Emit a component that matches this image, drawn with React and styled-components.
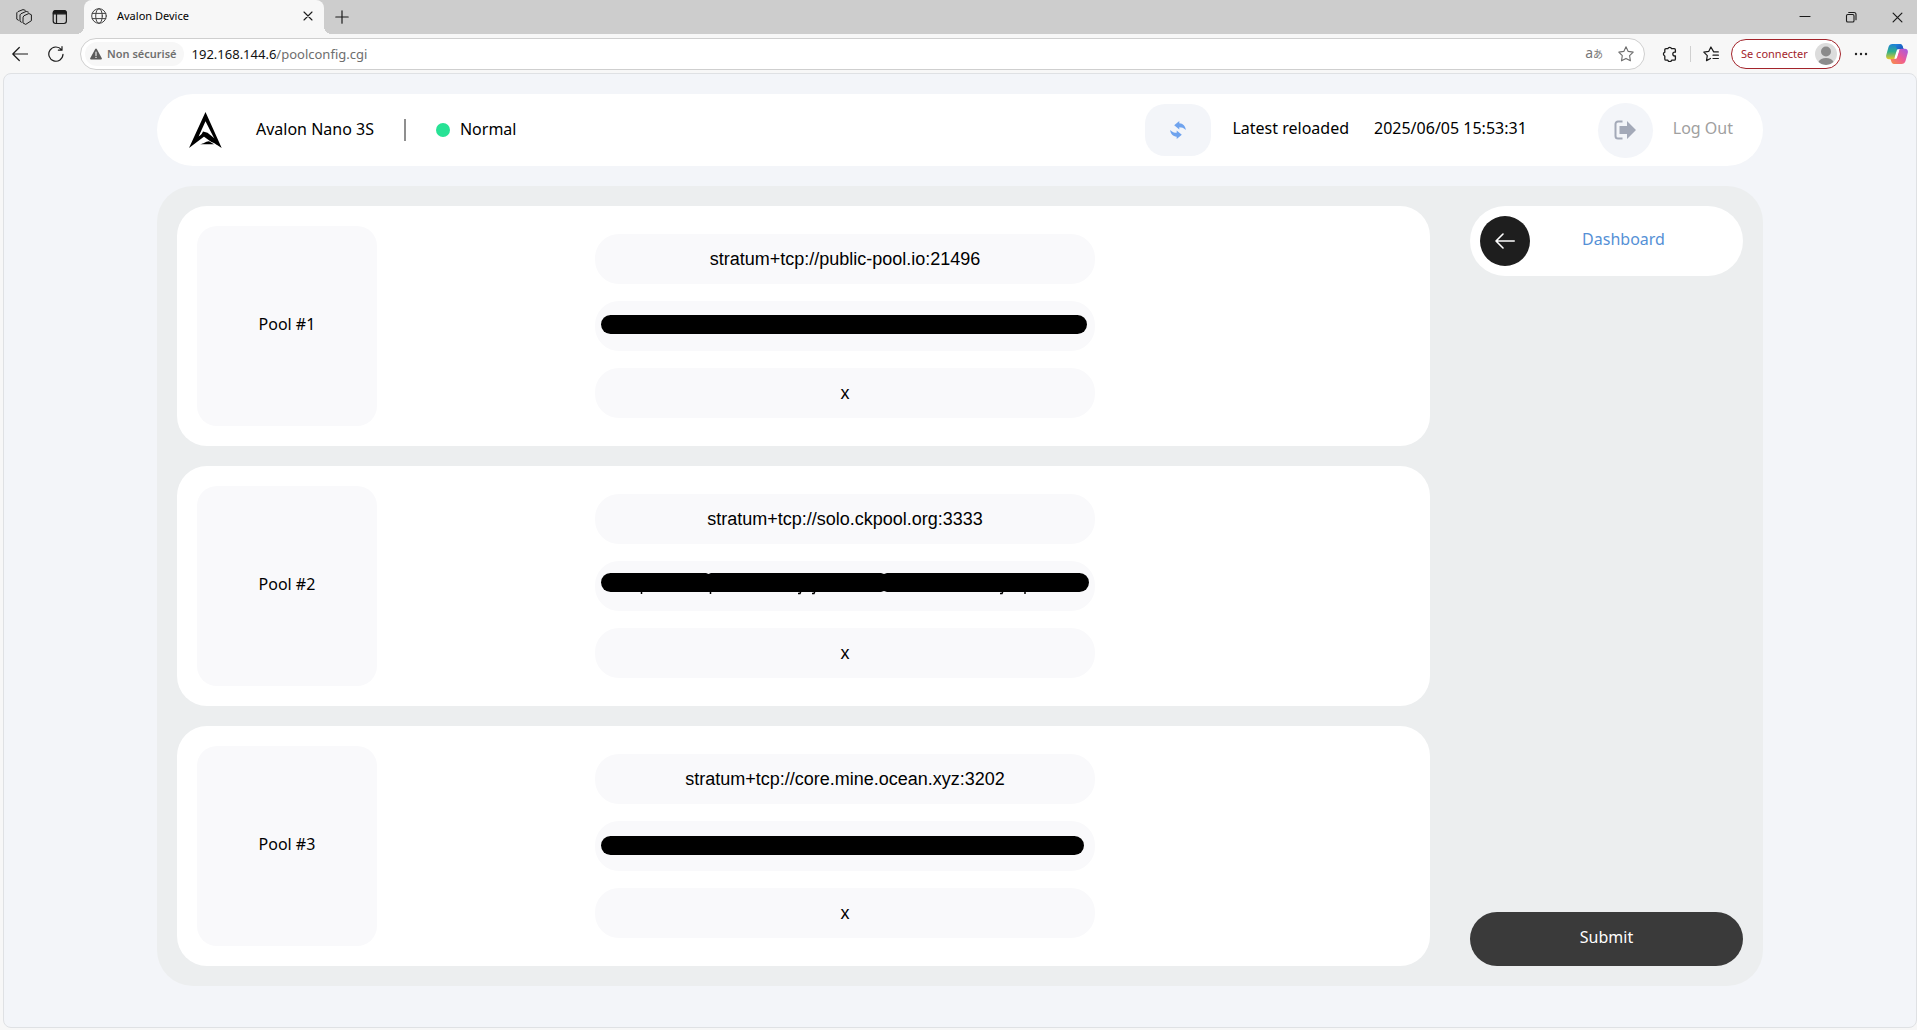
import React, { useState } from "react";
import styled, { createGlobalStyle, css } from "styled-components";

const GlobalStyle = createGlobalStyle`
  :root {
    --chrome: #f7f7f7;
    --page: #f3f5f9;
    --panel: #eceeef;
    --soft: #f9f9fb;
  }

  * {
    box-sizing: border-box;
  }

  body {
    margin: 0;
    background: var(--chrome);
    font-family: "Noto Sans", "Open Sans", sans-serif;
    font-size: 16px;
    line-height: 24px;
    color: #000;
  }

  button,
  input {
    margin: 0;
    padding: 0;
    border: 0;
    font: inherit;
    color: inherit;
    background: none;
  }

  svg {
    display: block;
    flex: none;
  }
`;

const Browser = styled.div`
  display: flex;
  flex-direction: column;
  min-height: 100vh;
`;

/* ---------- browser chrome ---------- */

const TabStrip = styled.div`
  display: flex;
  align-items: center;
  height: 34px;
  padding: 0 12px 0 16px;
  background: #cdcdcd;
`;

const StripButtons = styled.div`
  display: flex;
  align-items: center;
  gap: 20px;
  width: 68px;
`;

const IconButton = styled.button`
  display: grid;
  place-items: center;
  width: ${(props) => props.$size || 16}px;
  height: ${(props) => props.$size || 16}px;
  color: ${(props) => props.$color || "#1b1b1b"};
`;

const Tab = styled.div`
  position: relative;
  display: flex;
  align-items: center;
  gap: 10px;
  width: 240px;
  height: 34px;
  margin-right: 8px;
  padding: 0 8px 2px 7px;
  background: var(--chrome);
  border-radius: 8px 8px 0 0;
  font-size: 11px;

  &::before,
  &::after {
    content: "";
    position: absolute;
    bottom: 0;
    width: 8px;
    height: 8px;
  }

  &::before {
    right: 100%;
    background: radial-gradient(circle at 0 0, transparent 8px, var(--chrome) 8px);
  }

  &::after {
    left: 100%;
    background: radial-gradient(circle at 100% 0, transparent 8px, var(--chrome) 8px);
  }
`;

const TabTitle = styled.span`
  flex: 1;
`;

const WindowButtons = styled.div`
  display: flex;
  gap: 30px;
  margin-left: auto;
`;

const Toolbar = styled.div`
  display: flex;
  align-items: center;
  height: 39px;
  padding: 0 4px 0 12px;
  background: var(--chrome);
`;

const NavButtons = styled.div`
  display: flex;
  gap: 20px;
  width: 68px;
`;

const AddressBar = styled.div`
  flex: 1;
  display: flex;
  align-items: center;
  height: 32px;
  padding: 0 10px 0 4px;
  background: #fff;
  border: 1px solid #cfcfcf;
  border-radius: 16px;
`;

const SecurityChip = styled.button`
  display: flex;
  align-items: center;
  gap: 5px;
  height: 24px;
  padding: 0 7px 0 5px;
  background: var(--chrome);
  border-radius: 12px;
  font-size: 11px;
  font-weight: 600;
  color: #6f6f6f;
`;

const Url = styled.span`
  flex: 1;
  padding-left: 8px;
  font-size: 13px;
  color: #6e6e6e;

  b {
    font-weight: 400;
    color: #111;
  }
`;

const Translate = styled.button`
  margin-right: 15px;
  font-family: "Noto Sans", "Noto Sans CJK JP", sans-serif;
  font-size: 14px;
  color: #777;

  small {
    font-size: 10px;
  }
`;

const ToolbarActions = styled.div`
  display: flex;
  align-items: center;
  gap: 12px;
  padding-left: 17px;
`;

const Separator = styled.span`
  width: 1px;
  height: 16px;
  background: #d0d0d0;
`;

const SignIn = styled.button`
  display: flex;
  align-items: center;
  justify-content: space-between;
  width: 110px;
  height: 30px;
  padding: 0 3px 0 9px;
  border: 1px solid #a3242b;
  border-radius: 15px;
  font-size: 11px;
  color: #a3242b;
  background: #fff;
`;

/* ---------- device page ---------- */

const Page = styled.main`
  flex: 1;
  margin: 0 0 2px 3px;
  padding: 20px 0 40px;
  background: var(--page);
  border: 1px solid #dfe1e4;
  border-radius: 8px;
`;

const Container = styled.div`
  display: flex;
  flex-direction: column;
  gap: 20px;
  width: 84%;
  margin: 0 auto;
`;

const Header = styled.header`
  display: flex;
  align-items: center;
  height: 72px;
  padding: 0 30px 0 32px;
  background: #fff;
  border-radius: 36px;
`;

const DeviceName = styled.span`
  margin-left: 33px;
  padding: 0 30px 2px 0;
`;

const Status = styled.span`
  display: flex;
  align-items: center;
  gap: 10px;
  padding-left: 30px;

  &::before {
    content: "";
    width: 14px;
    height: 14px;
    border-radius: 50%;
    background: #27e295;
  }
`;

const Divider = styled.span`
  width: 2px;
  height: 22px;
  background: #8f8f8f;
`;

const Raised = styled.span`
  padding-bottom: ${(props) => props.$by || 2}px;
`;

const HeaderActions = styled.div`
  display: flex;
  align-items: center;
  margin-left: auto;
`;

const Reload = styled.button`
  display: grid;
  place-items: center;
  width: 66px;
  height: 52px;
  margin-right: 21px;
  border-radius: 20px;
  background: var(--page);
`;

const ReloadTime = styled.time`
  margin: 0 71px 0 25px;
  padding-bottom: 4px;
`;

const LogOut = styled.button`
  display: flex;
  align-items: center;
  gap: 20px;
  color: #a0a0a0;
`;

const Round = styled.span`
  display: grid;
  place-items: center;
  width: ${(props) => props.$size}px;
  height: ${(props) => props.$size}px;
  border-radius: 50%;
  background: ${(props) => props.$bg};
`;

const Panel = styled.form`
  display: grid;
  grid-template-columns: 1fr 273px;
  gap: 40px;
  padding: 20px;
  background: var(--panel);
  border-radius: 36px;
`;

const Pools = styled.div`
  display: flex;
  flex-direction: column;
  gap: 20px;
`;

const PoolCard = styled.section`
  display: grid;
  grid-template-columns: 180px 9fr 500px 13fr;
  padding: 20px;
  background: #fff;
  border-radius: 30px;
`;

const PoolName = styled.h2`
  display: grid;
  place-items: center;
  height: 200px;
  margin: 0;
  padding-bottom: 4px;
  background: var(--soft);
  border-radius: 20px;
  font-size: 16px;
  font-weight: 400;
`;

const PoolFields = styled.div`
  grid-column: 3;
  align-self: center;
  display: flex;
  flex-direction: column;
  gap: 17px;
`;

const Field = styled.label`
  position: relative;
  display: block;
  height: 50px;
`;

const FieldInput = styled.input`
  width: 100%;
  height: 50px;
  border-radius: 24px;
  background: var(--soft);
  font-family: "Liberation Sans", Arial, sans-serif;
  font-size: 18px;
  text-align: center;
`;

const Mask = styled.svg`
  position: absolute;
  left: 6px;
  top: ${(props) => props.$top}px;
`;

const Side = styled.aside`
  display: flex;
  flex-direction: column;
  justify-content: space-between;
`;

const sideButton = css`
  display: flex;
  align-items: center;
  border-radius: 36px;
`;

const DashboardLink = styled.a`
  ${sideButton}
  height: 70px;
  padding: 0 10px;
  background: #fff;
  color: #5590d6;
  text-decoration: none;

  & > span:last-child {
    flex: 1;
    padding-right: 16px;
    text-align: center;
  }
`;

const Submit = styled.button`
  ${sideButton}
  justify-content: center;
  height: 54px;
  background: #3a3a3a;
  color: #fff;
`;

/* ---------- icons ---------- */

const Line = ({ size = 16, box = 16, width = 1.2, children }) => (
  <svg
    width={size}
    height={size}
    viewBox={`0 0 ${box} ${box}`}
    fill="none"
    stroke="currentColor"
    strokeWidth={width}
    strokeLinecap="round"
    strokeLinejoin="round"
    aria-hidden="true"
  >
    {children}
  </svg>
);

const WorkspacesIcon = () => (
  <Line width={1}>
    <path d="M7.3 7.800 8 6.700 12.900 4.500 15.400 5.800V11.700L9.700 15.400 7.300 14.100z" />
    <path d="M5.400 13.200 4 12.300V5.900L5 4.700 10.200 2.400 12.300 3.100" />
    <path d="M2.400 11.200 .800 10.200V3.800L2 2.600 7 .6 9.200 1.300" />
  </Line>
);

const TabActionsIcon = () => (
  <Line width={1.2}>
    <rect x="1.2" y="1.700" width="13.200" height="12.800" rx="2.400" />
    <path d="M1.400 4.800V4a2.300 2.300 0 0 1 2.300-2.300h8.200A2.300 2.300 0 0 1 14.300 4v.8z" fill="currentColor" />
    <path d="M4.500 5v9" />
  </Line>
);

const GlobeIcon = () => (
  <Line width={1}>
    <g stroke="#444">
      <circle cx="8" cy="8" r="7.300" />
      <ellipse cx="8" cy="8" rx="3.300" ry="7.300" />
      <path d="M1.300 5.400h13.400M1.300 10.600h13.400" />
    </g>
  </Line>
);

const CloseIcon = ({ size }) => (
  <Line size={size} box={10} width={1.1}>
    <path d="M1 1l8 8M9 1 1 9" />
  </Line>
);

const PlusIcon = () => (
  <Line size={14} box={14}>
    <path d="M7 .8v12.400M.8 7h12.400" />
  </Line>
);

const MinimizeIcon = () => (
  <Line>
    <path d="M3 7.500h10" />
  </Line>
);

const RestoreIcon = () => (
  <Line width={1.1}>
    <rect x="3.500" y="5.500" width="7.500" height="7.500" rx="1.300" />
    <path d="M5.700 3.500h5.300a2 2 0 0 1 2 2v5.300" />
  </Line>
);

const BackIcon = () => (
  <Line>
    <path d="M15.500 8H.8M7.300 1.500.8 8l6.500 6.500" />
  </Line>
);

const RefreshIcon = () => (
  <Line>
    <path d="M15 8.300A7.100 7.100 0 1 1 13.400 3.600M14 .7v3.500h-3.600" />
  </Line>
);

const WarningIcon = () => (
  <svg width="12" height="12" viewBox="0 0 12 12" aria-hidden="true">
    <path d="M5.200.9a.9.9 0 0 1 1.600 0l5 9.300c.3.700-.1 1.300-.8 1.300H1c-.7 0-1.100-.6-.8-1.300z" fill="#5c5c5c" />
    <path d="M6 4v3.600" stroke="#f7f7f7" strokeWidth="1.1" strokeLinecap="round" />
    <circle cx="6" cy="9.400" r=".7" fill="#f7f7f7" />
  </svg>
);

const StarIcon = () => (
  <Line width={1.1}>
    <path d="M8 .8l2.200 4.600 5 .7-3.600 3.600.8 5.100L8 12.400l-4.500 2.400.8-5.100L.8 6.100l5-.7z" />
  </Line>
);

const ExtensionsIcon = () => (
  <Line width={1.3}>
    <path d="M5.800 2.700a2 2 0 0 1 3.800 0h2.600a1.200 1.200 0 0 1 1.200 1.200v2.300h-.7a1.900 1.900 0 0 0 0 3.800h.7v2.900a1.200 1.200 0 0 1-1.200 1.200h-2.500a2 2 0 0 1-3.900 0H4a1.200 1.200 0 0 1-1.200-1.200V10a2 2 0 0 1 0-3.800V3.900A1.200 1.200 0 0 1 4 2.700z" />
  </Line>
);

const FavoritesIcon = () => (
  <Line width={1.2}>
    <path d="M15.300 5.900h-4.600L7.900 1 5.700 5.400.8 6.200l3.500 3.500-.8 4.900 4-2.100M10 9.200h5.400M10 12.500h5.400" />
  </Line>
);

const AvatarIcon = () => (
  <svg width="22" height="22" viewBox="0 0 22 22" aria-hidden="true">
    <circle cx="11" cy="11" r="11" fill="#dcdcdc" />
    <circle cx="11" cy="8.500" r="5" fill="#8b8b8b" />
    <path d="M3.500 19c1-2.800 4-4 7.500-4s6.500 1.200 7.500 4A11 11 0 0 1 11 22a11 11 0 0 1-7.500-3z" fill="#8b8b8b" />
  </svg>
);

const MoreIcon = () => (
  <svg width="16" height="16" viewBox="0 0 16 16" fill="#222" aria-hidden="true">
    <circle cx="3" cy="8" r="1.200" />
    <circle cx="8" cy="8" r="1.200" />
    <circle cx="13" cy="8" r="1.200" />
  </svg>
);

const CopilotIcon = () => (
  <svg width="22" height="20" viewBox="0 0 22 20" aria-hidden="true">
    <defs>
      <linearGradient id="copilotLeft" x1="0" y1="0" x2="0" y2="1">
        <stop offset="0" stopColor="#1b7fd8" />
        <stop offset=".5" stopColor="#2fb08c" />
        <stop offset="1" stopColor="#e8c928" />
      </linearGradient>
      <linearGradient id="copilotTop" x1="0" y1="0" x2="1" y2="1">
        <stop offset="0" stopColor="#2089e0" />
        <stop offset="1" stopColor="#1a49b5" />
      </linearGradient>
      <linearGradient id="copilotRight" x1="1" y1="0" x2="0" y2="1">
        <stop offset="0" stopColor="#a05be8" />
        <stop offset=".5" stopColor="#ee5a94" />
        <stop offset="1" stopColor="#f89245" />
      </linearGradient>
    </defs>
    <path d="M6.500 0H14c1.500 0 2.200 1 2.700 2.500L17.500 5H14c-1.600 0-2.500.8-3 2.400L9.300 13c-.5 1.500-1.200 2.200-2.700 2.200H3C1 15.200-.3 13.500.2 11.200L2.500 3C3.100 1.200 4.400 0 6.500 0z" fill="url(#copilotLeft)" />
    <path d="M9 0h5c1.500 0 2.200 1 2.700 2.500L17.500 5H14c-1.300 0-2 .4-2.600 1.400z" fill="url(#copilotTop)" />
    <path d="M15.500 20H8c-1.500 0-2.200-1-2.700-2.500L4.500 15H8c1.600 0 2.500-.8 3-2.400L12.700 7c.5-1.500 1.200-2.200 2.700-2.200H19c2 0 3.300 1.700 2.800 4L19.500 17c-.6 1.800-1.900 3-4 3z" fill="url(#copilotRight)" />
    <path d="M12 6.500 9.800 13.500" stroke="#fff" strokeWidth="2.400" strokeLinecap="round" />
  </svg>
);

const AvalonLogo = () => (
  <svg width="34" height="36" viewBox="0 0 34 36" role="img" aria-label="Avalon">
    <path d="M16.500 0 32.700 36 26.500 32 25 26 16.500 9.200 9.600 24.500 13 22 15.200 24.500 0 36z" />
    <path d="M14 19.500 18.500 20.800 27.500 28 28.200 32.500 22 29.800 12.300 22.800z" />
    <path d="M11 32.300c4-.5 5-2.800 9-3l5 3z" />
  </svg>
);

const SyncIcon = () => (
  <svg width="16" height="18" viewBox="0 0 16 18" fill="#6fa3ee" aria-hidden="true">
    <path id="syncArrow" d="M9.300 0v2.300C13 2.600 15.500 5 15.800 9 13.800 6.800 11.800 6.200 9.300 6.200V8.500L4.200 4.200z" />
    <use href="#syncArrow" transform="rotate(180 8 9)" />
  </svg>
);

const LogOutIcon = () => (
  <svg width="22" height="20" viewBox="0 0 22 20" aria-hidden="true">
    <path d="M8.500 1.500H4A2.500 2.500 0 0 0 1.500 4v12A2.500 2.500 0 0 0 4 18.500h4.500" fill="none" stroke="#a3a9b8" strokeWidth="2" />
    <path d="M5.500 6H13V1l9 9-9 9v-5H5.500z" fill="#a3a9b8" />
  </svg>
);

const ArrowLeftIcon = () => (
  <Line size={20} box={20} width={1.6}>
    <path d="M19.200 10H1M8 3l-7 7 7 7" />
  </Line>
);

/* ---------- page parts ---------- */

const POOLS = [
  { id: 1, url: "stratum+tcp://public-pool.io:21496", pass: "x", mask: { top: 14, width: 486 } },
  { id: 2, url: "stratum+tcp://solo.ckpool.org:3333", pass: "x", mask: { top: 12, width: 488, tails: true } },
  { id: 3, url: "stratum+tcp://core.mine.ocean.xyz:3202", pass: "x", mask: { top: 15, width: 483 } },
];

const WorkerMask = ({ top, width, tails }) => (
  <Mask $top={top} width={width} height="22" viewBox={`0 0 ${width} 22`} aria-hidden="true">
    <rect width={width} height="19" rx="9.500" />
    {tails && (
      <>
        <path d="M40.500 18v3M109.500 18v3M424 18v3M200 18l-1 2.500h-2M214 18l-1 2.500h-2M402 18l-1 2.500h-2" fill="none" stroke="#000" strokeWidth="1.500" />
        <path d="M105 0h5l-2.500 1zM280 0h6l-3 1zM280 19h6l-3-1z" fill="#f9f9fb" />
      </>
    )}
  </Mask>
);

const Pool = ({ pool }) => {
  const [url, setUrl] = useState(pool.url);
  const [pass, setPass] = useState(pool.pass);
  return (
    <PoolCard>
      <PoolName>Pool #{pool.id}</PoolName>
      <PoolFields>
        <Field>
          <FieldInput aria-label={`Pool ${pool.id} URL`} value={url} onChange={(e) => setUrl(e.target.value)} />
        </Field>
        <Field>
          <FieldInput aria-label={`Pool ${pool.id} worker`} />
          <WorkerMask {...pool.mask} />
        </Field>
        <Field>
          <FieldInput aria-label={`Pool ${pool.id} password`} value={pass} onChange={(e) => setPass(e.target.value)} />
        </Field>
      </PoolFields>
    </PoolCard>
  );
};

const BrowserChrome = () => (
  <>
    <TabStrip>
      <StripButtons>
        <IconButton aria-label="Workspaces">
          <WorkspacesIcon />
        </IconButton>
        <IconButton aria-label="Tab actions">
          <TabActionsIcon />
        </IconButton>
      </StripButtons>
      <Tab>
        <GlobeIcon />
        <TabTitle>Avalon Device</TabTitle>
        <IconButton aria-label="Close tab">
          <CloseIcon size={10} />
        </IconButton>
      </Tab>
      <IconButton aria-label="New tab" $size={20}>
        <PlusIcon />
      </IconButton>
      <WindowButtons>
        <IconButton aria-label="Minimize">
          <MinimizeIcon />
        </IconButton>
        <IconButton aria-label="Restore">
          <RestoreIcon />
        </IconButton>
        <IconButton aria-label="Close window">
          <CloseIcon size={11} />
        </IconButton>
      </WindowButtons>
    </TabStrip>
    <Toolbar>
      <NavButtons>
        <IconButton aria-label="Back">
          <BackIcon />
        </IconButton>
        <IconButton aria-label="Refresh">
          <RefreshIcon />
        </IconButton>
      </NavButtons>
      <AddressBar>
        <SecurityChip>
          <WarningIcon />
          Non sécurisé
        </SecurityChip>
        <Url>
          <b>192.168.144.6</b>/poolconfig.cgi
        </Url>
        <Translate aria-label="Translate">
          a<small>あ</small>
        </Translate>
        <IconButton aria-label="Add to favorites" $color="#6e6e6e">
          <StarIcon />
        </IconButton>
      </AddressBar>
      <ToolbarActions>
        <IconButton aria-label="Extensions">
          <ExtensionsIcon />
        </IconButton>
        <Separator />
        <IconButton aria-label="Favorites">
          <FavoritesIcon />
        </IconButton>
        <SignIn>
          Se connecter
          <AvatarIcon />
        </SignIn>
        <IconButton aria-label="More">
          <MoreIcon />
        </IconButton>
        <IconButton aria-label="Copilot" $size={32}>
          <CopilotIcon />
        </IconButton>
      </ToolbarActions>
    </Toolbar>
  </>
);

const App = () => (
  <Browser>
    <GlobalStyle />
    <BrowserChrome />
    <Page>
      <Container>
        <Header>
          <AvalonLogo />
          <DeviceName>Avalon Nano 3S</DeviceName>
          <Divider />
          <Status>
            <Raised>Normal</Raised>
          </Status>
          <HeaderActions>
            <Reload aria-label="Reload">
              <SyncIcon />
            </Reload>
            <Raised $by={4}>Latest reloaded</Raised>
            <ReloadTime>2025/06/05 15:53:31</ReloadTime>
            <LogOut>
              <Round $size={55} $bg="var(--page)">
                <LogOutIcon />
              </Round>
              <Raised $by={4}>Log Out</Raised>
            </LogOut>
          </HeaderActions>
        </Header>
        <Panel onSubmit={(e) => e.preventDefault()}>
          <Pools>
            {POOLS.map((pool) => (
              <Pool key={pool.id} pool={pool} />
            ))}
          </Pools>
          <Side>
            <DashboardLink href="#dashboard">
              <Round $size={50} $bg="#1e1e1e">
                <IconButton as="span" $size={20} $color="#fff">
                  <ArrowLeftIcon />
                </IconButton>
              </Round>
              <Raised $by={4}>Dashboard</Raised>
            </DashboardLink>
            <Submit type="submit">
              <Raised $by={4}>Submit</Raised>
            </Submit>
          </Side>
        </Panel>
      </Container>
    </Page>
  </Browser>
);

export default App;
